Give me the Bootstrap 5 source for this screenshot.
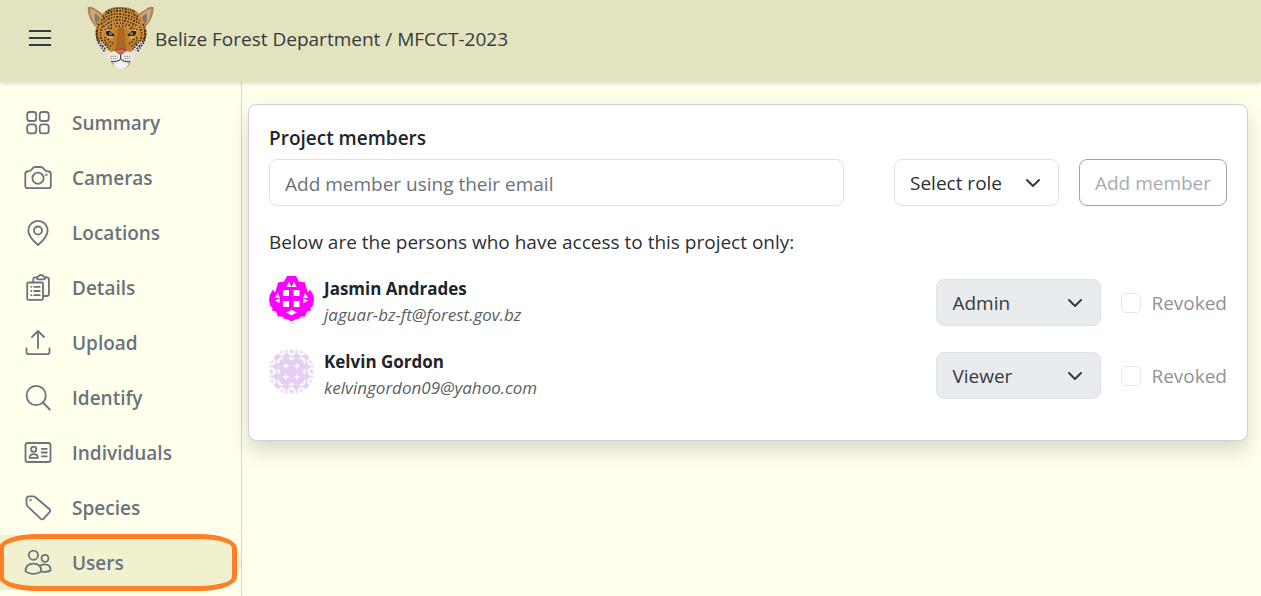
<!DOCTYPE html>
<html lang="en">
<head>
<meta charset="utf-8">
<meta name="viewport" content="width=device-width, initial-scale=1">
<title>MFCCT-2023 – Project members</title>
<link href="https://cdn.jsdelivr.net/npm/bootstrap@5.3.0/dist/css/bootstrap.min.css" rel="stylesheet">
<script src="https://cdn.jsdelivr.net/npm/bootstrap@5.3.0/dist/js/bootstrap.bundle.min.js"></script>
<style>
  body { font-family: "Open Sans", "Noto Sans", sans-serif; font-size: 19px; line-height: 30px; color: #2b3035; background: #ffffeb; }
  .app-bar { height: 82px; background: #e3e3c0; box-shadow: 0 2px 4px rgba(0,0,0,.12); z-index: 2; }
  .menu-toggle { padding: 0; margin: 0 35px 4px 28px; line-height: 0; border: 0; }
  .project-title { color: #343a40; }
  .side-menu { width: 242px; border-right: 1px solid #d6d6cc; padding-top: 13px; }
  .side-item { height: 55px; padding-left: 24px; gap: 20px; color: #6b7280; font-weight: 600; font-size: 19px; text-decoration: none; position: relative; }
  .side-item svg { fill: none; stroke: #6b7280; stroke-width: 1.8; stroke-linecap: round; stroke-linejoin: round; }
  .side-item.current { background: #f2f1cf; border-radius: 0 28px 28px 0; }
  .side-item.current::after { content: ""; position: absolute; inset: -1px 4px -1px -1px; border: 5px solid #ff7f27; border-radius: 38px / 14px; }
  .main-pane { padding: 22px 13px 22px 6px; }
  .members-card { border: 1px solid #cfd0d1; border-radius: 8px; padding: 18px 20px; box-shadow: 0 10px 20px rgba(0,0,0,.15); }
  .card-heading { font-size: 19px; line-height: 30px; font-weight: 600; margin: 0 0 6px; color: #212529; }
  .role-gap { margin-left: 30px; }
  .tool-line { gap: 20px; }
  .form-control, .form-select, .btn-add { height: 47px; padding: 8px 15px 6px; font-size: 19px; line-height: 31px; border-radius: 8px; }
  .form-control, .form-select { border-color: #dee2e6; }
  .form-control::placeholder { color: #6c7278; }
  .form-select { width: 165px; flex: none; color: #2b3035; background-size: 16px 16px; background-position: right 17px center; }
  .form-select:disabled { background-color: #e9ecef; color: #343a40; opacity: 1; }
  .btn-add { width: 148px; padding: 8px 0 6px; }
  .btn-add:disabled { color: #a7acb1; border-color: #a0a5aa; opacity: 1; }
  .intro { margin: 21px 0 19px; }
  .member-row { height: 73px; gap: 10px; }
  .person-name { font-size: 17px; line-height: 26px; font-weight: 700; color: #212529; }
  .person-mail { font-size: 17px; line-height: 26px; font-style: italic; color: #5a5f64; }
  .access-tools { gap: 20px; padding-top: 3px; }
  .revoke-pair { gap: 10px; }
  .revoke-box { width: 20px; height: 20px; margin: 0; border: 1px solid #dcdcdc; border-radius: 5px; }
  .revoke-box:disabled { opacity: .7; }
  .revoke-label { color: #909294; }
</style>
</head>
<body class="d-flex flex-column min-vh-100">
<header class="app-bar d-flex align-items-center position-relative">
  <button class="btn menu-toggle" type="button" aria-label="Menu">
    <svg width="24" height="20" viewBox="0 0 24 20" fill="none" stroke="#343a40" stroke-width="2"><path d="M1 2h22M1 9h22M1 16h22"/></svg>
  </button>
  <svg class="mb-2" width="68" height="64" viewBox="21 15 204 192" aria-hidden="true">
    <path d="M23 22q11-5 27 7l18 13-22 39q-24-28-23-59Z" fill="#b98042"/>
    <path d="M221 22q-11-5-26 7l-20 13 22 39q25-28 24-59Z" fill="#b98042"/>
    <path d="M30 27q16 1 34 22L47 77Q31 53 30 27Z" fill="#c3aa90"/>
    <path d="M214 27q-17 1-35 22l18 28q16-24 17-50Z" fill="#c3aa90"/>
    <path d="M44 39q13 8 18 18L50 77q-8-16-6-38ZM200 39q-13 8-18 18l14 20q7-16 4-38Z" fill="#887963"/>
    <path d="M122 21Q78 19 65 47 45 70 46 103q3 28 22 45 14 12 24 33 9 27 31 27t31-27q10-21 23-33 20-18 23-45 0-33-20-56-14-28-59-26Z" fill="#cd8c38"/>
    <path d="M48 122q15-3 29 14l19 27 53 0 19-27q15-17 29-14-5 17-25 33-14 26-22 34H94q-9-16-22-34-20-16-24-33Z" fill="#e5e0dc"/>
    <path d="M68 120q18-6 34 4h40q16-10 34-4l-18 30-20 14h-32l-20-14Z" fill="#c98630"/>
    <path d="M103 88h40l8 64q-28 16-56 0Z" fill="#c17d2c"/>
    <path d="M114 82h18l7 70h-32Z" fill="#aa6825"/>
    <g fill="none" stroke="#33241b" stroke-width="5">
      <path d="M78 37Q98 23 122 25t44 12" stroke-dasharray="4 4 6 4 3 4"/>
      <path d="M68 50Q92 30 122 33t54 18" stroke-dasharray="5 4 3 4 7 4"/>
      <path d="M64 62Q91 38 122 42t58 20" stroke-dasharray="3 4 6 5 4 4"/>
      <path d="M63 73Q90 47 122 51t60 22" stroke-dasharray="6 4 4 4 3 5"/>
      <path d="M70 80Q96 57 122 60t52 20" stroke-dasharray="4 5 3 4 6 4"/>
      <path d="M84 81q22-14 38-12t38 12" stroke-dasharray="3 5 5 6"/>
      <path d="M106 80q16-5 32 0" stroke-dasharray="4 6"/>
      <path d="M57 72q-12 30 0 52l22 27M189 72q12 30 0 52l-22 27" stroke-dasharray="5 4 3 4 6 4"/>
      <path d="M67 80q-12 26 1 46l20 22M179 80q12 26-1 46l-20 22" stroke-dasharray="3 4 6 4 4 4"/>
      <path d="M50 92q-2 20 6 38l18 25M196 92q2 20-6 38l-18 25" stroke-dasharray="4 5 5 4"/>
      <path d="M76 111q-5 12 8 23l10 6M170 111q5 12-8 23l-10 6" stroke-dasharray="4 4 3 5"/>
      <path d="M84 116q4 13 17 15M162 116q-4 13-17 15" stroke-dasharray="4 5"/>
      <path d="M74 90l24-6M172 90l-24-6" stroke-dasharray="5 4"/>
    </g>
    <path d="M77 94q14-7 27 13-14 5-24-2ZM169 94q-14-7-27 13 14 5 24-2Z" fill="#201c18"/>
    <path d="M75 93l12-4M171 93l-12-4M84 111l14 0M162 111l-14 0" stroke="#ead6b4" stroke-width="3"/>
    <circle cx="91" cy="101" r="5" fill="#97955d"/><circle cx="155" cy="101" r="5" fill="#97955d"/>
    <circle cx="91" cy="100" r="2" fill="#111"/><circle cx="155" cy="100" r="2" fill="#111"/>
    <path d="M86 167q5-21 35-9 32-12 37 9 1 20-15 20-20-11-40 0-16-3-17-20Z" fill="#eeeae8"/>
    <path d="M99 191q22-16 47 0-8 17-24 17t-23-17Z" fill="#eeeff0"/>
    <path d="M106 149q16-4 32 0-4 9-12 13h-8q-8-4-12-13Z" fill="#df696b" stroke="#6a332b" stroke-width="2"/>
    <path d="M122 163v14q-8 9-29 8M122 177q8 9 29 8" fill="none" stroke="#302724" stroke-width="3"/>
    <path d="M91 169h20M93 176h16M133 169h20M135 176h16" stroke="#4a403a" stroke-width="2.5" stroke-dasharray="3 4"/>
  </svg>
  <span class="project-title mb-1">Belize Forest Department / MFCCT-2023</span>
</header>

<div class="d-flex flex-grow-1">
  <nav class="side-menu flex-shrink-0" aria-label="Project">
    <a href="#" class="side-item d-flex align-items-center"><svg width="28" height="28" viewBox="0 0 28 28"><rect x="3.2" y="3" width="9" height="9" rx="2.6"/><rect x="15.7" y="3" width="9" height="9" rx="2.6"/><rect x="3.2" y="15.4" width="9" height="9" rx="2.6"/><rect x="15.7" y="15.4" width="9" height="9" rx="2.6"/></svg>Summary</a>
    <a href="#" class="side-item d-flex align-items-center"><svg width="28" height="28" viewBox="0 0 28 28"><path d="M3.2 7.5q3.2 0 4.5-2 1.6-2.5 3.3-2.5h6q1.7 0 3.3 2.5 1.3 2 4.5 2 2 .3 2 2.5V22q0 2.200-2.200 2.200H3.500Q1.300 24.200 1.300 22V10q0-2.200 1.900-2.500Z"/><circle cx="14" cy="14.200" r="5.600"/><circle cx="22.300" cy="10.800" r=".4"/></svg>Cameras</a>
    <a href="#" class="side-item d-flex align-items-center"><svg width="28" height="28" viewBox="0 0 28 28"><path d="M14 26C11 23.500 4.300 17.500 4.300 11.300a9.700 9.500 0 0 1 19.400 0C23.700 17.500 17 23.500 14 26Z"/><circle cx="14" cy="11.500" r="4"/></svg>Locations</a>
    <a href="#" class="side-item d-flex align-items-center"><svg width="28" height="28" viewBox="0 0 28 28"><rect x="3.200" y="8.500" width="15.800" height="17.300" rx="1.400"/><path d="M9.300 8V5.200q0-1.900 2-1.900h1.500M21.200 3.300h1.500q2.200 0 2.200 2.200v14.300q0 2.200-2.200 2.200h-3M12.800 3.300q0 2 1.500 2h5.400q1.500 0 1.500-2-.1-1-1.800-1-.6-1.300-2.400-1.300t-2.400 1.300q-1.700 0-1.800 1ZM10.300 12.800h5.400M10.300 17h5.400M10.300 21.200h5.400M7.200 12.800h.2M7.200 17h.2M7.200 21.200h.2"/></svg>Details</a>
    <a href="#" class="side-item d-flex align-items-center"><svg width="28" height="28" viewBox="0 0 28 28"><path d="M2.500 19.300V23q0 2.200 2.200 2.200h18.600q2.200 0 2.200-2.200v-3.700M14 19V2.200M8 8l6-6 6 6"/></svg>Upload</a>
    <a href="#" class="side-item d-flex align-items-center"><svg width="28" height="28" viewBox="0 0 28 28"><circle cx="12.200" cy="11.500" r="9.600"/><path d="M19 18.500l6.800 7"/></svg>Identify</a>
    <a href="#" class="side-item d-flex align-items-center"><svg width="28" height="28" viewBox="0 0 28 28"><rect x="1.500" y="4" width="25" height="19" rx="2.300"/><circle cx="9.700" cy="10.300" r="2.600"/><path d="M5.600 18.800q0-3.600 4.100-3.600t4.200 3.600ZM17.800 9.800h5M17.800 13.500h5M17.800 17.300h5"/></svg>Individuals</a>
    <a href="#" class="side-item d-flex align-items-center"><svg width="28" height="28" viewBox="0 0 28 28"><path d="M2.500 5.200Q2.500 2.300 5.400 2.300H9q1.400 0 2.400.9l13.600 11.500q2 1.700.5 3.500l-5.700 6.400q-1.500 1.500-3.300 0L3.700 12.400Q2.500 11.200 2.500 9.600Z"/><circle cx="6.500" cy="6" r=".4"/></svg>Species</a>
    <a href="#" class="side-item current d-flex align-items-center" aria-current="page"><svg width="28" height="28" viewBox="0 0 28 28"><circle cx="9.400" cy="6.200" r="4.600"/><circle cx="21" cy="9.300" r="3.500"/><path d="M1.500 22.400q0-7.700 7.900-7.700t7.900 7.700q-3 2.500-7.900 2.500t-7.900-2.500ZM15.500 17.200q2-1.900 5.500-1.900 5.500 0 5.700 6-2.700 2.300-9.200 1.400"/></svg>Users</a>
  </nav>

  <main class="main-pane flex-grow-1">
    <section class="card members-card">
      <h1 class="card-heading"><label for="email">Project members</label></h1>
      <form class="tool-line d-flex">
        <input type="email" id="email" class="form-control flex-grow-1" placeholder="Add member using their email">
        <select class="form-select role-gap" aria-label="Role"><option>Select role</option><option>Admin</option><option>Viewer</option></select>
        <button type="button" class="btn btn-outline-secondary btn-add flex-shrink-0" disabled>Add member</button>
      </form>
      <p class="intro">Below are the persons who have access to this project only:</p>

      <div class="member-row d-flex align-items-start">
        <svg class="flex-shrink-0" width="45" height="45" viewBox="0 0 45 45" aria-hidden="true">
          <path d="M9 6.500l6-1L18 0h9l3 5.500 6 1 1 4 2 6 2-3 3 5 1 5-1 6-2.500 2.500.5 2.500-4 1-2 5-4 0-2 2-4 1-3.500 2-3.500-2-4-1-2-2H9l-2-5-4-1 .5-2.500L1 29.500l-1-6 1-5 3-5 2 3 2-6Z" fill="#f0f"/>
          <path d="M14 14h6v6h-6ZM24.500 14h6v6h-6ZM14 25h6v6h-6ZM24.500 25h6v6h-6ZM17.500 11L20 5.500l2.300 5.500ZM22.700 11L25 5.500l2.500 5.500ZM6 22l3-5.500 1.800 5.500ZM6 24.500l4.800-2.300v5ZM39 22l-3-5.500-1.800 5.500ZM39 24.500l-4.800-2.300v5ZM17 36.500l5.500-2.800 5.500 2.800-5.500 2.800Z" fill="#fff"/>
        </svg>
        <div class="flex-grow-1"><div class="person-name">Jasmin Andrades</div><div class="person-mail">jaguar-bz-ft@forest.gov.bz</div></div>
        <div class="access-tools d-flex align-items-center">
          <select class="form-select" aria-label="Role of Jasmin Andrades" disabled><option>Admin</option></select>
          <div class="revoke-pair d-flex align-items-center">
            <input type="checkbox" class="form-check-input revoke-box" id="revoke-1" disabled>
            <label for="revoke-1" class="revoke-label">Revoked</label>
          </div>
        </div>
      </div>

      <div class="member-row d-flex align-items-start">
        <svg class="flex-shrink-0" width="45" height="45" viewBox="0 0 45 45" aria-hidden="true">
          <defs>
            <clipPath id="disc"><circle cx="22.500" cy="22.500" r="22.500"/></clipPath>
            <pattern id="stars" x="2.500" y="2.500" width="10" height="10" patternUnits="userSpaceOnUse"><path d="M5-1l2 4 4 2-4 2-2 4-2-4-4-2 4-2Z" fill="#e5cff3"/><path d="M0 0h2.500L0 2.500ZM10 0v2.500L7.500 0ZM0 10V7.500L2.500 10ZM10 10H7.500L10 7.500Z" fill="#e5cff3"/></pattern>
          </defs>
          <g clip-path="url(#disc)">
            <path d="M0 0h45v45H0Z" fill="url(#stars)"/>
            <path d="M14 9.500h5l3.500 2.500L26 9.500h5l4.500 5v5L33 22.500l2.500 3.500v5L31 35.500h-5L22.500 33 19 35.500h-5L9.500 31v-5l2.500-3.500-2.500-3v-5Z" fill="#e5cff3"/>
            <path d="M17 13.500l1 2.500 2.500 1-2.500 1-1 2.500-1-2.500-2.500-1 2.500-1ZM28 13.500l1 2.500 2.500 1-2.500 1-1 2.500-1-2.500-2.500-1 2.500-1ZM17 24.500l1 2.500 2.500 1-2.500 1-1 2.500-1-2.500-2.500-1 2.500-1ZM28 24.500l1 2.500 2.500 1-2.500 1-1 2.500-1-2.500-2.500-1 2.500-1Z" fill="#fff"/>
          </g>
        </svg>
        <div class="flex-grow-1"><div class="person-name">Kelvin Gordon</div><div class="person-mail">kelvingordon09@yahoo.com</div></div>
        <div class="access-tools d-flex align-items-center">
          <select class="form-select" aria-label="Role of Kelvin Gordon" disabled><option>Viewer</option></select>
          <div class="revoke-pair d-flex align-items-center">
            <input type="checkbox" class="form-check-input revoke-box" id="revoke-2" disabled>
            <label for="revoke-2" class="revoke-label">Revoked</label>
          </div>
        </div>
      </div>
    </section>
  </main>
</div>
</body>
</html>
